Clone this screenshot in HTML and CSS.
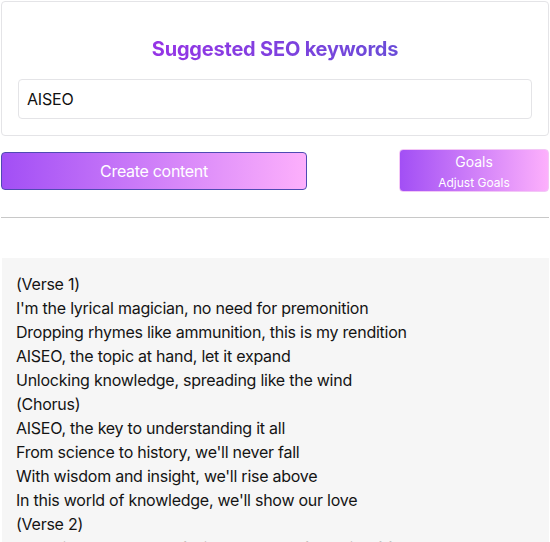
FILE: index.html
```html
<!DOCTYPE html>
<html lang="en">
<head>
    <meta charset="UTF-8">
    <meta name="viewport" content="width=device-width, initial-scale=1.0">
    <title>AISEO - Content</title>
    <link rel="stylesheet" href="styles.css">
</head>
<body>
    <div class="page">
        <div class="card">
            <h2 class="title">Suggested SEO keywords</h2>
            <input type="text" class="keyword-input" value="AISEO">
        </div>
        <div class="actions">
            <button class="btn btn-create">Create content</button>
            <button class="btn btn-goals">
                <span class="goals-main">Goals</span>
                <span class="goals-sub">Adjust Goals</span>
            </button>
        </div>
        <hr class="divider">
        <div class="output">
            <p>(Verse 1)</p>
            <p>I'm the lyrical magician, no need for premonition</p>
            <p>Dropping rhymes like ammunition, this is my rendition</p>
            <p>AISEO, the topic at hand, let it expand</p>
            <p>Unlocking knowledge, spreading like the wind</p>
            <p>(Chorus)</p>
            <p>AISEO, the key to understanding it all</p>
            <p>From science to history, we'll never fall</p>
            <p>With wisdom and insight, we'll rise above</p>
            <p>In this world of knowledge, we'll show our love</p>
            <p>(Verse 2)</p>
            <p>Exploring the depths of wisdom, a true fountain of facts</p>
        </div>
    </div>
</body>
</html>
```

FILE: styles.css
```css
:root {
    --purple: #a24ff5;
    --pink: #fdb0fc;
    --border: #e4e4e7;
    --radius: 4px;
}
html, body { margin: 0; background: #fff; }
body {
    font-family: Inter, "Noto Sans", sans-serif;
    color: #141414;
    overflow: hidden;
}
.page { padding: 1px 1px 0 1px; }
.card {
    border: 1px solid var(--border);
    border-radius: var(--radius);
    padding: 33px 16px 16px;
}
.title {
    margin: 0 auto 16px;
    width: fit-content;
    text-align: center;
    font-size: 20px;
    line-height: 28px;
    font-weight: 700;
    letter-spacing: -0.2px;
    background: linear-gradient(90deg, #9634e6, #6a4cd8);
    -webkit-background-clip: text;
    background-clip: text;
    color: transparent;
}
.keyword-input {
    display: block;
    width: 100%;
    height: 40px;
    box-sizing: border-box;
    border: 1px solid var(--border);
    border-radius: var(--radius);
    padding: 0 8px;
    font-family: inherit;
    font-size: 16px;
    letter-spacing: -0.2px;
    color: #111;
    outline: none;
}
.actions {
    display: flex;
    justify-content: space-between;
    align-items: center;
    margin-top: 13px;
}
.btn {
    font-family: inherit;
    color: #fff;
    border-radius: var(--radius);
    background: linear-gradient(90deg, var(--purple), var(--pink));
    cursor: pointer;
    padding: 0;
}
.btn-create {
    width: 306px;
    height: 38px;
    border: 1px solid #4f4ab3;
    font-size: 16px;
    letter-spacing: -0.3px;
}
.btn-goals {
    width: 150px;
    height: 43px;
    border: 1px solid #f3c7f6;
    display: flex;
    flex-direction: column;
    align-items: center;
    justify-content: center;
    padding-top: 4px;
}
.goals-main { font-size: 14px; line-height: 20px; }
.goals-sub { font-size: 12px; line-height: 22px; }
.divider {
    border: 0;
    border-top: 1px solid #c8c8c8;
    margin: 25px 0 40px;
}
.output {
    background: #f6f6f6;
    padding: 14px 14px 20px;
    margin-left: 1px;
}
.output p {
    margin: 0;
    font-size: 16px;
    line-height: 24px;
    letter-spacing: -0.25px;
}
```
